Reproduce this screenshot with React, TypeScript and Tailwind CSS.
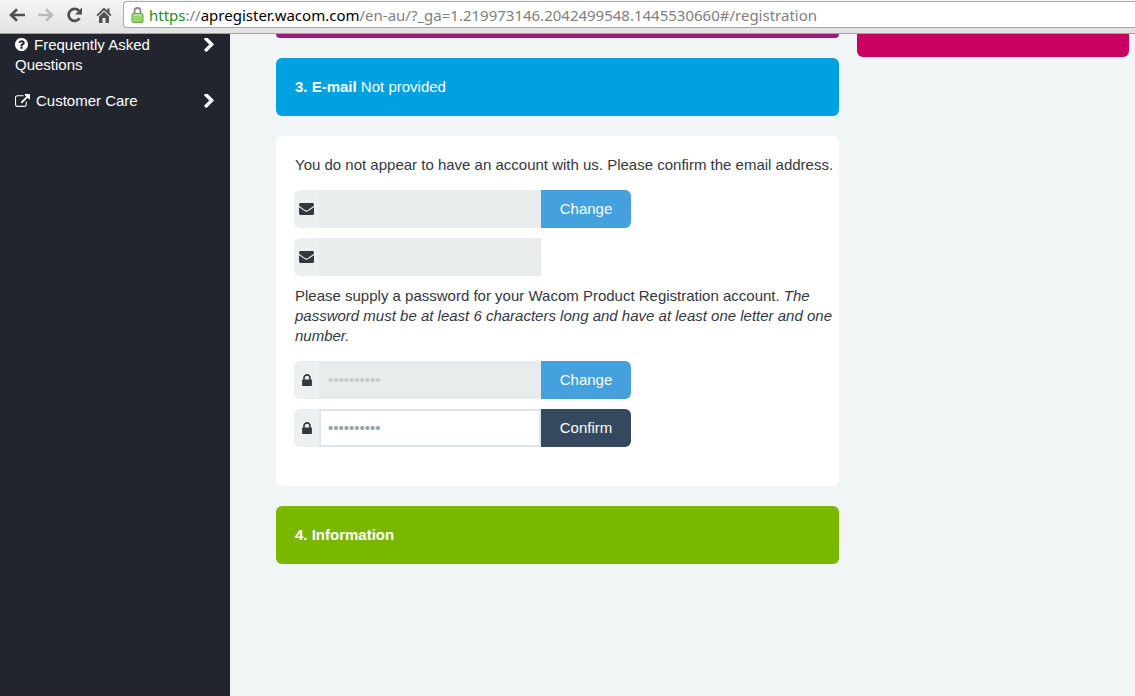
import React from 'react';

const ICONS = {
  question: {
    viewBox: '128 128 1536 1536',
    d: 'M1024 1376v-192q0-14-9-23t-23-9h-192q-14 0-23 9t-9 23v192q0 14 9 23t23 9h192q14 0 23-9t9-23zm256-672q0-88-55.5-163t-138.5-116-170-41q-243 0-371 213-15 24 8 42l132 100q7 6 19 6 16 0 25-12 53-68 86-92 34-24 86-24 48 0 85.5 26t37.5 59q0 38-20 61t-68 45q-63 28-115.5 86.5t-52.5 125.5v36q0 14 9 23t23 9h192q14 0 23-9t9-23q0-19 21.5-49.5t54.5-49.5q32-18 49-28.5t46-35 44.5-48 28-60.5 12.5-81zm384 192q0 209-103 385.5t-279.5 279.5-385.5 103-385.5-103-279.5-279.5-103-385.5 103-385.5 279.5-279.5 385.5-103 385.5 103 279.5 279.5 103 385.5z',
  },
  external: {
    viewBox: '0 0 1792 1536',
    d: 'M1408 928v320q0 119-84.5 203.5t-203.5 84.5h-832q-119 0-203.5-84.5t-84.5-203.5v-832q0-119 84.5-203.5t203.5-84.5h704q14 0 23 9t9 23v64q0 14-9 23t-23 9h-704q-66 0-113 47t-47 113v832q0 66 47 113t113 47h832q66 0 113-47t47-113v-320q0-14 9-23t23-9h64q14 0 23 9t9 23zm384-864v512q0 26-19 45t-45 19-45-19l-176-176-652 652q-10 10-23 10t-23-10l-114-114q-10-10-10-23t10-23l652-652-176-176q-19-19-19-45t19-45 45-19h512q26 0 45 19t19 45z',
  },
  chevron: {
    viewBox: '346 154 1036 1484',
    d: 'M1363 877l-742 742q-19 19-45 19t-45-19l-166-166q-19-19-19-45t19-45l531-531-531-531q-19-19-19-45t19-45l166-166q19-19 45-19t45 19l742 742q19 19 19 45t-19 45z',
  },
  envelope: {
    viewBox: '0 256 1792 1408',
    d: 'M1792 710v794q0 66-47 113t-113 47h-1472q-66 0-113-47t-47-113v-794q44 49 101 87 362 246 497 345 57 42 92.5 65.5t94.5 48 110 24.5h2q51 0 110-24.5t94.5-48 92.5-65.5q170-123 498-345 57-39 100-87zm0-294q0 79-49 151t-122 123q-376 261-468 325-10 7-42.5 31t-54 38.5-52 32.5-57.5 27-50 9h-2q-23 0-50-9t-57.5-27-52-32.5-54-38.5-42.5-31q-91-64-262-182.5t-205-142.5q-62-42-117-115.5t-55-136.5q0-78 41.5-130t118.5-52h1472q65 0 112.5 47t47.5 113z',
  },
  lock: {
    viewBox: '320 128 1152 1408',
    d: 'M640 768h512v-192q0-106-75-181t-181-75-181 75-75 181v192zm832 96v576q0 40-28 68t-68 28h-960q-40 0-68-28t-28-68v-576q0-40 28-68t68-28h32v-192q0-184 132-316t316-132 316 132 132 316v192h32q40 0 68 28t28 68z',
  },
};

interface IconProps {
  name: keyof typeof ICONS;
  className?: string;
}

function Icon({ name, className }: IconProps) {
  return (
    <svg viewBox={ICONS[name].viewBox} className={className} fill="currentColor" aria-hidden="true">
      <path d={ICONS[name].d} />
    </svg>
  );
}

function Toolbar() {
  return (
    <header className="flex h-[34px] shrink-0 items-center border-b border-[#a3a3a3] bg-linear-to-b from-[#f6f6f6] to-[#e2e2e2] pb-1">
      <nav className="flex shrink-0 items-center gap-[11px] pr-2.5 pl-2 text-[#505050]" aria-label="Browser">
        <button type="button" aria-label="Back" className="flex size-[18px] items-center justify-center">
          <svg viewBox="0 0 18 16" className="h-4 w-[18px]" fill="none" stroke="currentColor" strokeWidth="2.6">
            <path d="M17 8H3.5M9 2.2L3 8l6 5.8" />
          </svg>
        </button>
        <button type="button" aria-label="Forward" className="flex size-[18px] items-center justify-center text-[#bcbcbc]">
          <svg viewBox="0 0 18 16" className="h-4 w-[18px]" fill="none" stroke="currentColor" strokeWidth="2.6">
            <path d="M1 8h13.5M9 2.2L15 8l-6 5.8" />
          </svg>
        </button>
        <button type="button" aria-label="Reload" className="flex size-[18px] items-center justify-center">
          <svg viewBox="0 0 18 18" className="size-[18px]" fill="none" stroke="currentColor" strokeWidth="2.7">
            <path d="M13.6 12.2A6 6 0 1 1 13 4.8" />
            <path d="M16 1.5v7H9z" fill="currentColor" stroke="none" />
          </svg>
        </button>
        <button type="button" aria-label="Home" className="flex size-[18px] items-center justify-center">
          <svg viewBox="0 0 18 18" className="size-[18px]" fill="currentColor">
            <path d="M9 1.5L1.500 9l1.200 1.300L9 4.300l6.300 6 1.200-1.300-2-2V2.500h-2.300v2.200z" />
            <path d="M9 5.800L4 10.500V17h3.500v-5h3v5H14v-6.500z" />
          </svg>
        </button>
      </nav>
      <div className="flex h-[27px] min-w-0 flex-1 items-center gap-[5px] rounded-l-sm border border-r-0 border-[#a8a8a8] bg-white pl-[7px]">
        <svg viewBox="0 0 13 16" className="h-4 w-[13px] shrink-0" aria-hidden="true">
          <path d="M3.500 7V4a3 3 0 0 1 6 0v3" fill="none" stroke="#8b8b8b" strokeWidth="1.800" />
          <rect x="1" y="6.500" width="11" height="9" rx="1" fill="#96d66b" stroke="#6aa548" />
          <path d="M2 8h9" stroke="#c9efb0" />
        </svg>
        <p className="truncate font-['Noto_Sans',sans-serif] text-[15px] leading-5 text-[#808080]">
          <span className="text-[#1a8f1a]">https</span>://<span className="text-black">apregister.wacom.com</span>
          /en-au/?_ga=1.219973146.2042499548.1445530660#/registration
        </p>
      </div>
    </header>
  );
}

interface SideLinkProps {
  icon: 'question' | 'external';
  label: string;
}

function SideLink({ icon, label }: SideLinkProps) {
  return (
    <li>
      <a href="#registration" className="flex items-start justify-between py-2 pr-4 pl-[15px]">
        <span className="w-40">
          <Icon
            name={icon}
            className={icon === 'question' ? 'mr-1.5 inline h-[13px] w-[13px] align-[-1px]' : 'mr-1.5 inline h-[13px] w-[15px] align-[-1px]'}
          />
          {label}
        </span>
        <Icon name="chevron" className="mt-[3px] h-3.5 w-[10px]" />
      </a>
    </li>
  );
}

interface FieldProps {
  id: string;
  label: string;
  icon: 'envelope' | 'lock';
  password?: boolean;
  disabled?: boolean;
  action?: 'Change' | 'Confirm';
}

function Field({ id, label, icon, password, disabled, action }: FieldProps) {
  return (
    <div className="flex h-[38px]">
      <label
        htmlFor={id}
        aria-label={label}
        className="flex w-[25px] shrink-0 items-center justify-center rounded-l-md bg-[#ecf0f1] text-[#34383f]"
      >
        <Icon name={icon} className={icon === 'envelope' ? 'h-3 w-[15px]' : 'h-3 w-[10px]'} />
      </label>
      <input
        id={id}
        type={password ? 'password' : 'email'}
        placeholder={password ? '••••••••••' : undefined}
        disabled={disabled}
        className="w-[222px] min-w-0 border-2 border-[#dce4ec] bg-white px-[7px] text-[15px] placeholder:text-[#95a5a6] disabled:border-[#e8eced] disabled:bg-[#e8eced] disabled:placeholder:text-[#c4cbcc]"
      />
      {action && (
        <button
          type="button"
          className={
            action === 'Change'
              ? 'w-[90px] rounded-r-md bg-[#45a0de] text-white'
              : 'w-[90px] rounded-r-md bg-[#34495e] text-white'
          }
        >
          {action}
        </button>
      )}
    </div>
  );
}

export default function App() {
  return (
    <div className="flex h-screen flex-col overflow-hidden bg-[#f1f5f6] font-['Liberation_Sans',Arial,sans-serif] text-[15px] leading-5 text-[#34383f]">
      <Toolbar />
      <div className="flex min-h-0 flex-1">
        <aside className="w-[230px] shrink-0 border-b border-[#2b1f33] bg-[#22252e] text-white">
          <ul className="-mt-[7px]">
            <SideLink icon="question" label="Frequently Asked Questions" />
            <SideLink icon="external" label="Customer Care" />
          </ul>
        </aside>

        <main className="grid min-w-0 flex-1 grid-cols-[563fr_272fr] items-start gap-[18px] pr-1.5 pl-[46px]">
          <div className="flex flex-col gap-5">
            <div className="h-1 rounded-b-md bg-[#a01a7d]" />
            <h2 className="rounded-md bg-[#00a1e1] px-[19px] py-[19px] text-white">
              <strong>3. E-mail</strong> Not provided
            </h2>

            <form className="rounded-md bg-white pt-[19px] pr-1 pb-[39px] pl-[19px]">
              <p>You do not appear to have an account with us. Please confirm the email address.</p>
              <div className="mt-[15px] -ml-px flex flex-col gap-2.5">
                <Field id="email" label="E-mail" icon="envelope" disabled action="Change" />
                <Field id="email-confirm" label="Confirm e-mail" icon="envelope" disabled />
              </div>
              <p className="mt-2.5">
                Please supply a password for your Wacom Product Registration account.{' '}
                <em>The password must be at least 6 characters long and have at least one letter and one number.</em>
              </p>
              <div className="mt-[15px] -ml-px flex flex-col gap-2.5">
                <Field id="password" label="Password" icon="lock" password disabled action="Change" />
                <Field id="password-confirm" label="Confirm password" icon="lock" password action="Confirm" />
              </div>
            </form>

            <h2 className="rounded-md bg-[#7ab800] px-[19px] py-[19px] font-bold text-white">4. Information</h2>
          </div>
          <div className="h-[23px] rounded-b-md bg-[#c90062]" />
        </main>
      </div>
    </div>
  );
}
